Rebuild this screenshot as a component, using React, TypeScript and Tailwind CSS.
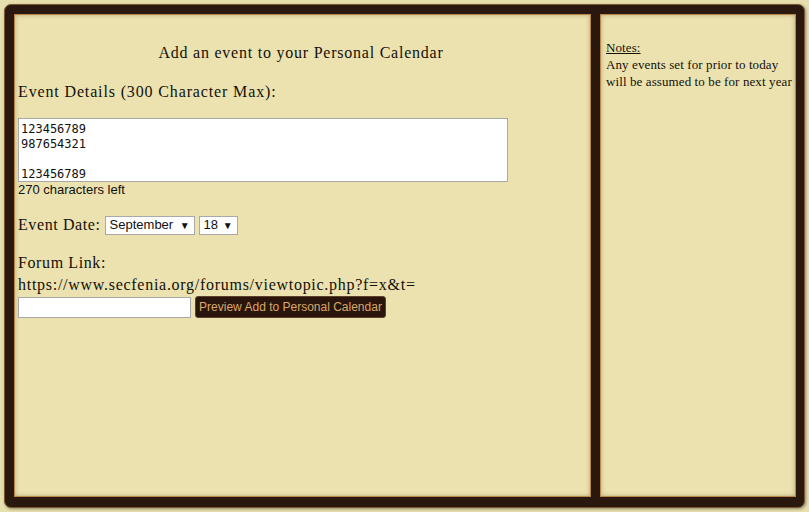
import React from "react";

const serif = { fontFamily: '"Liberation Serif", "Times New Roman", serif' };
const sans = { fontFamily: '"Liberation Sans", Arial, sans-serif' };

export default function App() {
  return (
    <div className="w-[809px] h-[512px] bg-[#e8dfae] p-[4px]" style={serif}>
      <div className="w-[801px] h-[504px] rounded-[7px] bg-[#2a170d] border border-[#7a5a34] pl-[9px] pt-[9px] pr-[8px] pb-[10px] flex gap-[9px] shadow-[1px_1px_3px_rgba(0,0,0,0.4)]">
        <div className="w-[577px] h-full border border-[#b8874a] bg-[#ebe2b0] shadow-[inset_0_0_4px_rgba(120,90,40,0.45)] pt-[27px] pl-[3px] flex flex-col text-[#141008]">
          <div className="text-center text-[16px] leading-[22px] tracking-[0.77px] mr-[6px]">Add an event to your Personal Calendar</div>
          <div className="mt-[17px] text-[16px] leading-[22px] tracking-[0.86px]">Event Details (300 Character Max):</div>
          <div className="mt-[15px] w-[490px] h-[64px] bg-white border border-[#a9a9a9] px-[2px] pt-[3px] text-[12px] leading-[15px] text-[#111]" style={{ fontFamily: '"DejaVu Sans Mono", monospace' }}>
            <div>123456789</div>
            <div>987654321</div>
            <div>&nbsp;</div>
            <div>123456789</div>
          </div>
          <div className="text-[13px] leading-[15px] text-[#111]" style={sans}>270 characters left</div>
          <div className="mt-[17px] flex items-center h-[22px] text-[16px]">
            <span className="tracking-[0.6px]">Event Date:</span>
            <div className="ml-[4px] w-[90px] h-[19px] bg-white border border-[#a9a9a9] flex items-center justify-between pl-[4px] pr-[4px] text-[13px] text-[#111]" style={sans}>
              <span>September</span>
              <span className="text-[10px]">▼</span>
            </div>
            <div className="ml-[4px] w-[39px] h-[19px] bg-white border border-[#a9a9a9] flex items-center justify-between pl-[4px] pr-[4px] text-[13px] text-[#111]" style={sans}>
              <span>18</span>
              <span className="text-[10px]">▼</span>
            </div>
          </div>
          <div className="mt-[16px] text-[16px] leading-[22px] tracking-[0.6px]">Forum Link:</div>
          <div className="text-[16px] leading-[22px] tracking-[0.72px]">https://www.secfenia.org/forums/viewtopic.php?f=x&amp;t=</div>
          <div className="flex items-center">
            <div className="w-[173px] h-[21px] bg-white border border-[#a9a9a9]"></div>
            <div className="ml-[4px] w-[191px] h-[22px] rounded-[3px] bg-[#2a150c] border border-[#5e4128] flex items-center justify-center text-[12px] text-[#d9a968]" style={sans}>
              Preview Add to Personal Calendar
            </div>
          </div>
        </div>
        <div className="w-[196px] h-full border border-[#b8874a] bg-[#ebe2b0] shadow-[inset_0_0_4px_rgba(120,90,40,0.45)] pt-[24px] pl-[5px] text-[13px] leading-[17px] tracking-[0.1px] text-[#141008]">
          <div className="underline">Notes:</div>
          <div>Any events set for prior to today</div>
          <div>will be assumed to be for next year</div>
        </div>
      </div>
    </div>
  );
}
